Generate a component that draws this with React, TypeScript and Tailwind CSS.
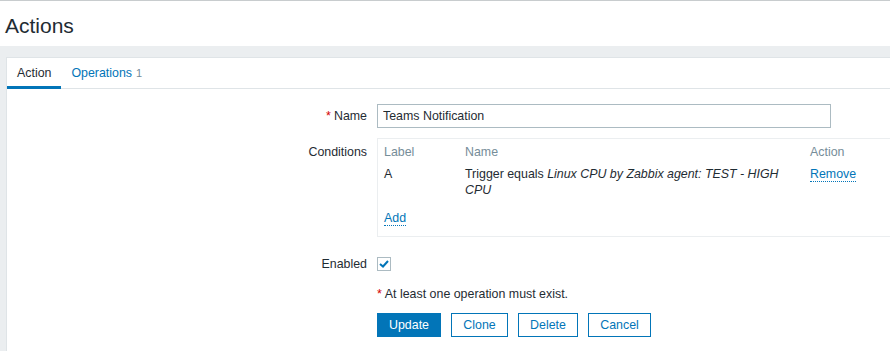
import React from "react";

const Req = () => <span className="text-[#d40000] mr-[3px]">*</span>;

export default function App() {
  return (
    <div className="w-[890px] h-[351px] overflow-hidden bg-[#ebeef0] text-[12.4px] text-[#1f2c33] font-['Liberation_Sans',Arial,sans-serif] border-t border-[#c8ccce]">
      <div className="h-[45px] bg-white flex items-center pl-[5px]">
        <h1 className="text-[21px] leading-none pt-[3px]">Actions</h1>
      </div>
      <div className="pt-[11px] pl-[6px]">
        <div className="w-[900px] bg-white border border-[#dfe4e7] min-h-[300px]">
          <div className="flex h-[31px] border-b border-[#dfe4e7]">
            <div className="px-[10px] flex items-center border-b-[3px] border-[#0275b8] h-[31px] pt-[2px]">Action</div>
            <div className="px-[10px] flex items-center h-[31px] text-[#0275b8]">
              Operations <span className="text-[#768d99] ml-[4px] text-[11px]">1</span>
            </div>
          </div>

          <div className="pt-[15px]">
            <div className="flex items-center">
              <div className="w-[370px] text-right pr-[10px]"><Req />Name</div>
              <input
                readOnly
                value="Teams Notification"
                className="w-[454px] h-[24px] border border-[#acbbc2] px-[5px] text-[12.4px] text-[#1f2c33] outline-none"
              />
            </div>

            <div className="flex mt-[10px]">
              <div className="w-[370px] text-right pr-[10px] pt-[5px]">Conditions</div>
              <div className="flex-1 border-t border-l border-b border-[#ebeef0] h-[99px] px-[6px] pt-[5px]">
                <div className="grid grid-cols-[81px_345px_1fr] leading-[16px]">
                  <div className="text-[#768d99]">Label</div>
                  <div className="text-[#768d99]">Name</div>
                  <div className="text-[#768d99]">Action</div>
                  <div className="pt-[6px]">A</div>
                  <div className="pt-[6px] pr-[20px]">
                    Trigger equals <i>Linux CPU by Zabbix agent: TEST - HIGH CPU</i>
                  </div>
                  <div className="pt-[6px]">
                    <span className="text-[#0275b8] border-b border-dotted border-[#0275b8]">Remove</span>
                  </div>
                </div>
                <div className="mt-[11px]">
                  <span className="text-[#0275b8] border-b border-dotted border-[#0275b8]">Add</span>
                </div>
              </div>
            </div>

            <div className="flex items-center mt-[18px]">
              <div className="w-[370px] text-right pr-[10px]">Enabled</div>
              <div className="w-[14px] h-[14px] border border-[#acbbc2] flex items-center justify-center">
                <svg width="10" height="8" viewBox="0 0 10 8">
                  <path d="M1 4 L4 6.5 L9 1" fill="none" stroke="#0275b8" strokeWidth="2" />
                </svg>
              </div>
            </div>

            <div className="ml-[370px] mt-[11px]"><Req />At least one operation must exist.</div>

            <div className="ml-[370px] mt-[10px] flex gap-[10px]">
              <button className="h-[24px] w-[64px] bg-[#0275b8] text-white border border-[#0275b8]">Update</button>
              <button className="h-[24px] w-[57px] border border-[#0275b8] text-[#0275b8] bg-white">Clone</button>
              <button className="h-[24px] w-[60px] border border-[#0275b8] text-[#0275b8] bg-white">Delete</button>
              <button className="h-[24px] w-[63px] border border-[#0275b8] text-[#0275b8] bg-white">Cancel</button>
            </div>
          </div>
        </div>
      </div>
    </div>
  );
}
